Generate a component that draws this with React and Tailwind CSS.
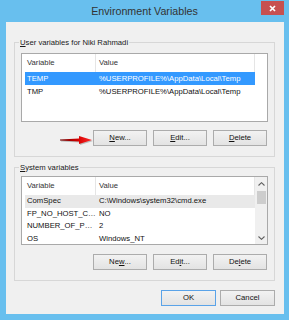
import React from 'react';

const U = ({ children }) => <span className="underline underline-offset-[1px]">{children}</span>;

const Btn = ({ children, primary, className = '' }) => (
  <button
    className={`h-[16px] flex items-center justify-center text-[7.7px] leading-none text-[#111] bg-linear-to-b from-[#f2f2f2] to-[#e3e3e3] border ${
      primary ? 'border-[#5aa3e8]' : 'border-[#acacac]'
    } ${className}`}
  >
    {children}
  </button>
);

const Chevron = ({ down }) => (
  <svg width="7" height="4" viewBox="0 0 7 4" className={down ? 'rotate-180' : ''}>
    <polyline points="0.5,3.5 3.5,0.7 6.5,3.5" fill="none" stroke="#606060" strokeWidth="1.1" />
  </svg>
);

const GroupBox = ({ label, children, className = '' }) => (
  <div className={`relative border border-[#d7d7d7] ${className}`}>
    <span className="absolute left-[4px] -top-[6px] px-[1px] bg-[#f0f0f0] text-[7.7px] leading-[11px] text-[#1a1a1a] whitespace-nowrap">
      {label}
    </span>
    {children}
  </div>
);

const ListView = ({ rows, selected, inactive, scroll, rowH = 'h-[13px]' }) => (
  <div className="ml-[6px] w-[247px] h-[69px] border border-[#a9a9a9] bg-white flex overflow-hidden">
    <div className="flex-1 flex flex-col text-[7.7px]">
      <div className="h-[18px] flex shrink-0 text-[#333]">
        <div className="w-[74px] pl-[5px] flex items-center border-r border-[#e5e5e5]">Variable</div>
        <div className="w-[159px] pl-[3px] flex items-center border-r border-[#e5e5e5]">Value</div>
      </div>
      {rows.map(([name, value], i) => {
        const sel = i === selected;
        const bg = sel ? (inactive ? 'bg-[#e9e9e9] text-[#111]' : 'bg-[#3399ff] text-white') : 'text-[#111]';
        return (
          <div key={name} className={`ml-[3px] w-[230px] ${rowH} shrink-0 flex items-center ${bg}`}>
            <div className="w-[71px] pl-[2px] whitespace-nowrap overflow-hidden">{name}</div>
            <div className="flex-1 pl-[3px] whitespace-nowrap overflow-hidden">{value}</div>
          </div>
        );
      })}
    </div>
    {scroll && (
      <div className="w-[13px] h-full bg-[#f0f0f0] flex flex-col items-center shrink-0">
        <div className="h-[13px] flex items-center justify-center">
          <Chevron />
        </div>
        <div className="mt-[1px] w-[9px] h-[13px] bg-[#cdcdcd]" />
        <div className="flex-1" />
        <div className="h-[13px] flex items-center justify-center">
          <Chevron down />
        </div>
      </div>
    )}
  </div>
);

const RedArrow = () => (
  <svg className="absolute left-[45px] top-[91px]" width="35" height="13" viewBox="0 0 35 13">
    <defs>
      <linearGradient id="ar" x1="0" y1="0" x2="1" y2="0">
        <stop offset="0" stopColor="#6e0000" />
        <stop offset="0.55" stopColor="#d40000" />
        <stop offset="1" stopColor="#ff2b2b" />
      </linearGradient>
    </defs>
    <polygon points="1,6.6 20,5.4 20,3 33,7 20,11 20,8.6 1,7.4" fill="rgba(0,0,0,0.22)" />
    <polygon points="0,5.6 19,4.4 19,2 32,6 19,10 19,7.6 0,6.4" fill="url(#ar)" />
  </svg>
);

export default function App() {
  const userRows = [
    ['TEMP', '%USERPROFILE%\\AppData\\Local\\Temp'],
    ['TMP', '%USERPROFILE%\\AppData\\Local\\Temp'],
  ];
  const sysRows = [
    ['ComSpec', 'C:\\Windows\\system32\\cmd.exe'],
    ['FP_NO_HOST_C…', 'NO'],
    ['NUMBER_OF_P…', '2'],
    ['OS', 'Windows_NT'],
  ];

  return (
    <div className="w-[289px] h-[320px] bg-[#68bfee] flex flex-col font-['Liberation_Sans',Arial,sans-serif]">
      {/* Title bar */}
      <div className="relative h-[22px] shrink-0 flex items-center justify-center">
        <span className="text-[10.7px] text-[#333]">Environment Variables</span>
        <button className="absolute right-[5px] top-[1px] w-[23px] h-[14px] bg-[#c75050] flex items-center justify-center">
          <svg width="7" height="7" viewBox="0 0 7 7">
            <path d="M1 1L6 6M6 1L1 6" stroke="white" strokeWidth="1.7" />
          </svg>
        </button>
      </div>

      {/* Client area */}
      <div className="ml-[6px] mr-[5px] h-[292px] bg-[#f0f0f0] pl-[8px] pt-[20px] flex flex-col">
        <GroupBox label={<><U>U</U>ser variables for Niki Rahmadi</>} className="w-[261px] h-[115px] pt-[10px]">
          <ListView rows={userRows} selected={0} />
          <div className="mt-[8px] mr-[7px] flex justify-end gap-[6px]">
            <Btn className="w-[54px]"><U>N</U>ew...</Btn>
            <Btn className="w-[54px]"><U>E</U>dit...</Btn>
            <Btn className="w-[54px]"><U>D</U>elete</Btn>
          </div>
          <RedArrow />
        </GroupBox>

        <GroupBox label={<><U>S</U>ystem variables</>} className="mt-[10px] w-[261px] h-[114px] pt-[8px]">
          <ListView rows={sysRows} selected={0} inactive scroll rowH="h-[12.5px]" />
          <div className="mt-[9px] mr-[7px] flex justify-end gap-[6px]">
            <Btn className="w-[54px]">Ne<U>w</U>...</Btn>
            <Btn className="w-[54px]">Ed<U>i</U>t...</Btn>
            <Btn className="w-[54px]">De<U>l</U>ete</Btn>
          </div>
        </GroupBox>

        <div className="mt-[9px] w-[261px] flex justify-end gap-[4px]">
          <Btn primary className="w-[55px]">OK</Btn>
          <Btn className="w-[55px]">Cancel</Btn>
        </div>
      </div>
    </div>
  );
}
